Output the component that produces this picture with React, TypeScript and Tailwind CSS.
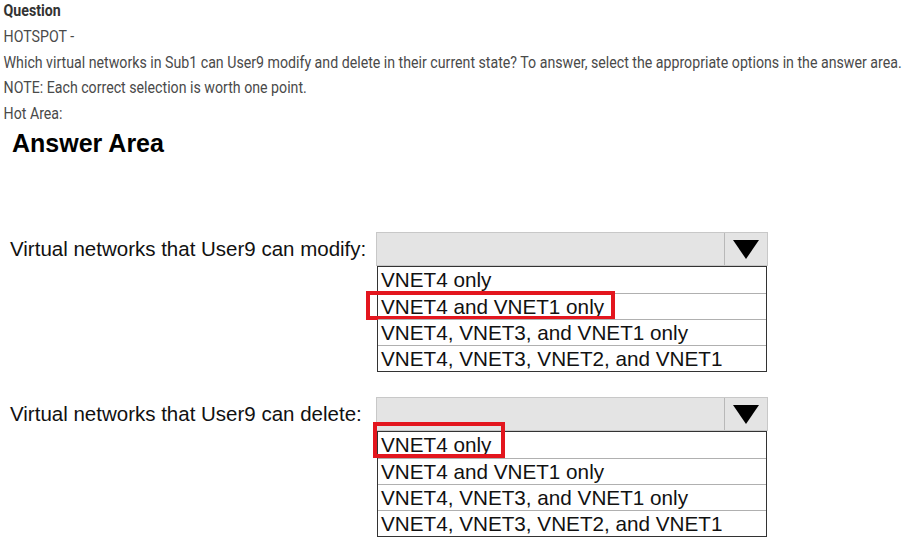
import React from "react";

const options = [
  "VNET4 only",
  "VNET4 and VNET1 only",
  "VNET4, VNET3, and VNET1 only",
  "VNET4, VNET3, VNET2, and VNET1",
];

function Dropdown({ label, mark }: { label: string; mark: number }) {
  return (
    <div className="flex flex-row items-start">
      <div className="w-[376px] h-[34px] flex items-center pl-[10px] text-[20.5px] text-[#111] font-['Liberation_Sans',Arial,sans-serif] whitespace-nowrap">
        {label}
      </div>
      <div className="flex flex-col w-[392px]">
        <div className="h-[34px] flex flex-row border border-[#c8c8c8] bg-[#e4e4e4]">
          <div className="flex-1" />
          <div className="w-[43px] border-l border-[#b8b8b8] flex items-center justify-center">
            <svg width="26" height="20" viewBox="0 0 26 20">
              <polygon points="0,1 26,1 13,20" fill="#000" />
            </svg>
          </div>
        </div>
        <div className="mx-[1px] border border-[#333] bg-white">
          {options.map((o, i) => (
            <div
              key={o}
              className={
                "relative h-[26px] flex items-center pl-[3px] text-[20.7px] text-[#111] font-['Liberation_Sans',Arial,sans-serif] whitespace-nowrap " +
                (i > 0 ? "border-t border-[#b0b0b0]" : "")
              }
            >
              {o}
              {mark === 1 && i === 1 && (
                <div className="absolute left-[-12px] top-[-3px] w-[249px] h-[29px] border-4 border-[#e3161e]" />
              )}
              {mark === 0 && i === 0 && (
                <div className="absolute left-[-5px] top-[-10px] w-[132px] h-[36px] border-4 border-[#e3161e]" />
              )}
            </div>
          ))}
        </div>
      </div>
    </div>
  );
}

export default function App() {
  return (
    <div className="w-[908px] h-[546px] bg-white overflow-hidden">
      <div className="px-[4px] mt-[-2px] font-['Roboto',sans-serif] text-[16px] leading-[25.8px] text-[#4a4a4a] whitespace-nowrap origin-top-left scale-x-[0.886]">
        <div className="font-bold text-[#333]">Question</div>
        <div>HOTSPOT -</div>
        <div>
          Which virtual networks in Sub1 can User9 modify and delete in their current state? To answer, select the appropriate options in the answer area.
        </div>
        <div>NOTE: Each correct selection is worth one point.</div>
        <div>Hot Area:</div>
      </div>
      <div className="mt-[4px] pl-[12px] text-[25px] leading-[25px] font-bold text-black font-['Liberation_Sans',Arial,sans-serif]">
        Answer Area
      </div>
      <div className="mt-[76px]">
        <Dropdown label="Virtual networks that User9 can modify:" mark={1} />
      </div>
      <div className="mt-[25px]">
        <Dropdown label="Virtual networks that User9 can delete:" mark={0} />
      </div>
    </div>
  );
}
